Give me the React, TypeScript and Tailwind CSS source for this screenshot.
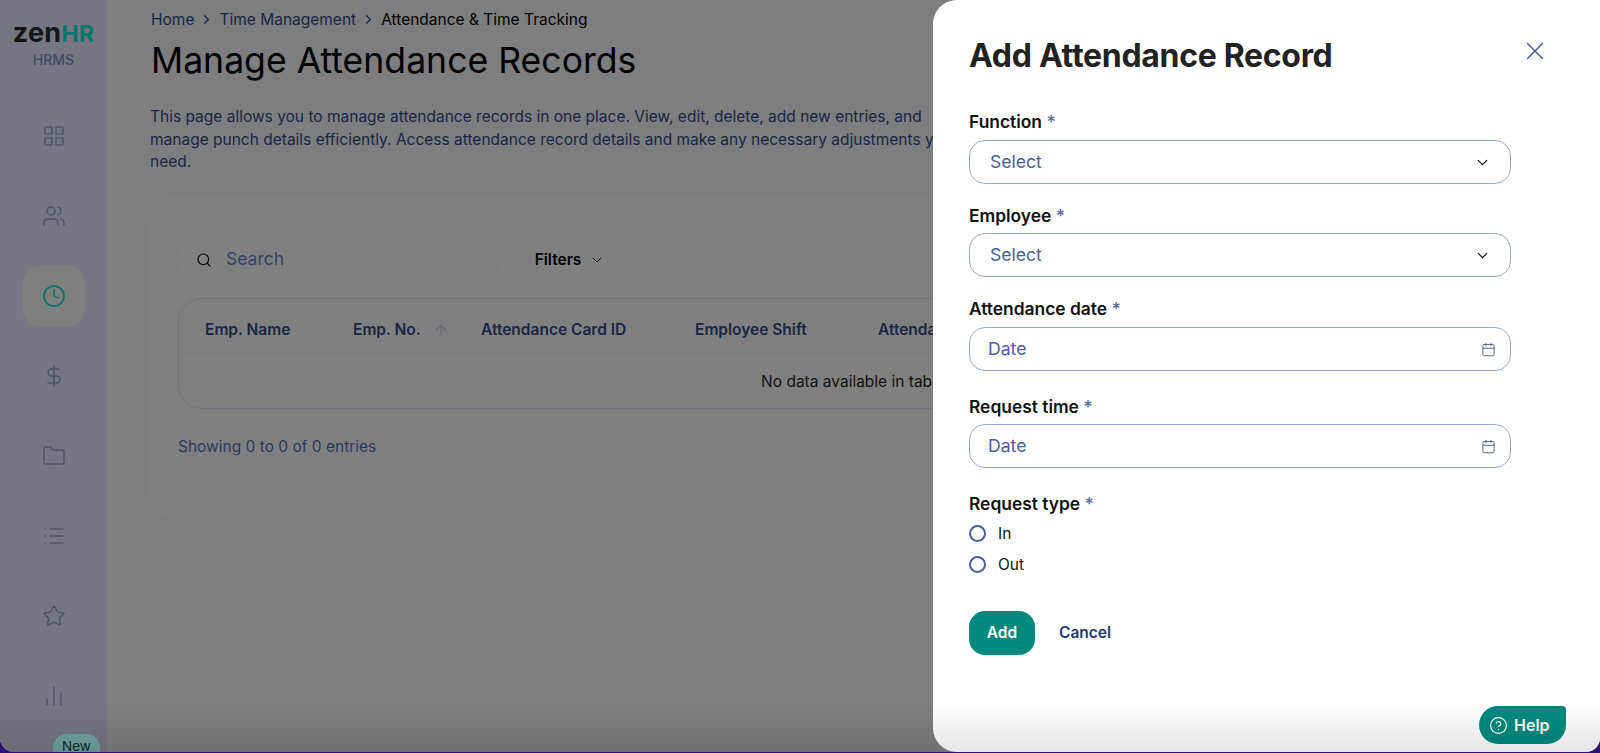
import { ArrowUp, BarChart2, Calendar, ChevronDown, ChevronRight, CircleHelp, Clock, DollarSign, Folder, LayoutGrid, List, Search, Star, Users, X } from "lucide-react";

const navItems = [LayoutGrid, Users, Clock, DollarSign, Folder, List, Star, BarChart2];

const Label = ({ text }: { text: string }) => (
  <label className="block text-[17.4px] leading-[22px] font-semibold text-[#111]">
    {text} <span className="text-[#5a72a8]">*</span>
  </label>
);

const SelectBox = () => (
  <div className="flex h-[44px] items-center justify-between rounded-[16px] border border-[#9aa8c8] pl-[20px] pr-[19px] text-[17.6px] text-[#4a6096]">
    <span>Select</span>
    <ChevronDown size={17} strokeWidth={1.75} className="text-[#111]" />
  </div>
);

const DateBox = () => (
  <div className="flex h-[44px] items-center justify-between rounded-[16px] border border-[#9aa8c8] pl-[18px] pr-[14px] text-[17.6px] text-[#4a6096]">
    <span>Date</span>
    <Calendar size={15} strokeWidth={1.5} className="text-[#4a6096]" />
  </div>
);

const Radio = ({ text }: { text: string }) => (
  <div className="flex h-[31px] items-center gap-[12px] text-[15.5px] text-[#111]">
    <span className="h-[17px] w-[17px] rounded-full border-2 border-[#4a6096]" />
    {text}
  </div>
);

export default function App() {
  return (
    <div className="h-[753px] w-[1600px] overflow-hidden bg-[#2b0f7c] font-['Inter',sans-serif]">
      <div className="relative flex h-[752px] overflow-hidden rounded-b-[14px] bg-[#7d7e7f]">
        {/* sidebar */}
        <aside className="relative w-[107px] shrink-0 bg-[#757783]">
          <div className="flex h-[96px] flex-col items-center pt-[18px]">
            <div className="text-[27px] leading-[30px] font-bold tracking-[0.3px] text-[#161616]">
              zen<span className="text-[23px] text-[#0a756c]">HR</span>
            </div>
            <div className="text-[14px] font-medium text-[#404a6a]">HRMS</div>
          </div>
          {navItems.map((Icon, i) => (
            <div key={i} className="flex h-[80px] items-center justify-center">
              {i === 2 ? (
                <div className="flex h-[62px] w-[62px] items-center justify-center rounded-[18px] bg-[#7e807e]">
                  <Icon size={24} strokeWidth={1.75} className="text-[#0a756c]" />
                </div>
              ) : (
                <Icon size={24} strokeWidth={1.5} className="text-[#4c5468]" />
              )}
            </div>
          ))}
          <div className="absolute left-[53px] top-[734px] h-[30px] w-[47px] rounded-[14px] bg-[#6fa39f] pt-[2px] text-center text-[13.5px] text-[#0e2a2a]">
            New
          </div>
        </aside>

        {/* page */}
        <main className="min-w-0 flex-1 pl-[43px] pr-[60px]">
          <nav className="flex h-[39px] items-center gap-[5px] pl-[1px] text-[15.5px] text-[#1a2646]">
            <span>Home</span>
            <ChevronRight size={15} />
            <span>Time Management</span>
            <ChevronRight size={15} />
            <span className="text-black">Attendance &amp; Time Tracking</span>
          </nav>
          <h1 className="pl-[1px] text-[35.6px] leading-[44px] text-black">Manage Attendance Records</h1>
          <p className="mt-[23px] w-[810px] text-[15.5px] leading-[22.5px] text-[#1a2646]">
            This page allows you to manage attendance records in one place. View, edit, delete, add new entries, and
            manage punch details efficiently. Access attendance record details and make any necessary adjustments you
            need.
          </p>

          <section className="mt-[23px] h-[322px] rounded-[24px] bg-[#808080] px-[26px] pt-[40px]">
            <div className="flex gap-[16px]">
              <div className="flex h-[46px] w-[323px] items-center gap-[14px] rounded-[20px] border border-[#7a7c86] px-[19px] text-[17.5px] text-[#34436a]">
                <Search size={16} strokeWidth={1.75} className="text-black" />
                Search
              </div>
              <div className="flex h-[46px] w-[110px] items-center justify-center gap-[8px] rounded-[16px] border border-[#7a7c86] text-[15.5px] font-semibold text-black">
                Filters
                <ChevronDown size={16} strokeWidth={1.5} />
              </div>
            </div>

            <div className="ml-[2px] mt-[15px] h-[111px] rounded-[24px] border border-[#70747e]">
              <div className="relative h-[55px] border-b border-[#787a82] text-[15.5px] font-semibold text-[#1a2646]">
                <span className="absolute left-[26px] top-[19px]">Emp. Name</span>
                <span className="absolute left-[174px] top-[19px]">Emp. No.</span>
                <ArrowUp size={16} className="absolute left-[254px] top-[23px] text-[#666a78]" />
                <span className="absolute left-[302px] top-[19px]">Attendance Card ID</span>
                <span className="absolute left-[516px] top-[19px]">Employee Shift</span>
                <span className="absolute left-[699px] top-[19px]">Attendance</span>
              </div>
              <div className="flex h-[54px] items-center justify-center pl-[14px] pt-[3px] text-[15.5px] text-[#111]">
                No data available in table
              </div>
            </div>
            <div className="ml-[2px] mt-[26px] text-[15.5px] text-[#2b3a5e]">Showing 0 to 0 of 0 entries</div>
          </section>
        </main>

        {/* drawer */}
        <div className="absolute bottom-0 right-0 top-0 w-[667px] rounded-l-[24px] bg-white pl-[36px] pr-[89px]">
          <div className="flex h-[111px] items-start pt-[33px]">
            <h2 className="text-[32px] leading-[46px] font-bold tracking-[-0.3px] text-[#222]">Add Attendance Record</h2>
          </div>
          <X size={30} strokeWidth={1.25} className="absolute left-[587px] top-[36px] text-[#4a6096]" />

          <Label text="Function" />
          <div className="mt-[7px]"><SelectBox /></div>
          <div className="mt-[21px]"><Label text="Employee" /></div>
          <div className="mt-[6px]"><SelectBox /></div>
          <div className="mt-[21px]"><Label text="Attendance date" /></div>
          <div className="mt-[7px]"><DateBox /></div>
          <div className="mt-[25px]"><Label text="Request time" /></div>
          <div className="mt-[6px]"><DateBox /></div>
          <div className="mt-[25px]"><Label text="Request type" /></div>
          <div className="mt-[3px]">
            <Radio text="In" />
            <Radio text="Out" />
          </div>
          <div className="mt-[31px] flex items-center gap-[24px]">
            <button className="h-[44px] w-[66px] rounded-[16px] bg-[#00897f] text-[15.5px] font-semibold text-white">Add</button>
            <button className="text-[15.5px] font-semibold text-[#1e3a72]">Cancel</button>
          </div>
          <button className="absolute left-[546px] top-[706px] flex h-[38px] w-[87px] items-center gap-[6px] rounded-[20px] rounded-tr-[4px] bg-[#00897f] pl-[10px] text-[16px] font-semibold text-white">
            <CircleHelp size={19} strokeWidth={1.5} />
            Help
          </button>
        </div>

        {/* fade along the bottom of the window */}
        <div className="pointer-events-none absolute bottom-0 left-0 right-0 h-[50px] bg-gradient-to-b from-transparent to-black/10" />
      </div>
    </div>
  );
}
